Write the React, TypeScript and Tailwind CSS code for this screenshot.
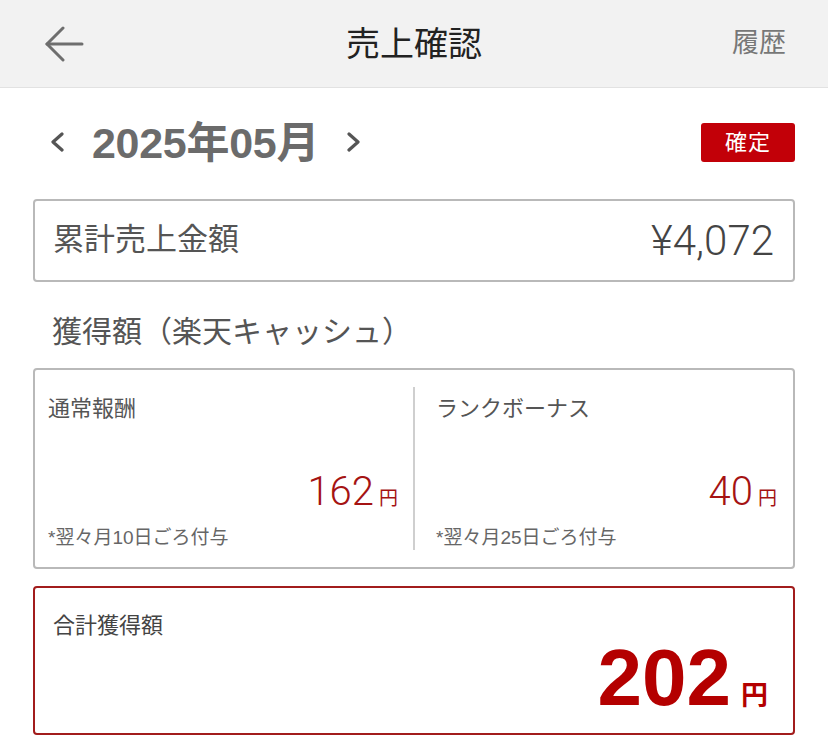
const JP = { fontFamily: '"Liberation Sans", "Noto Sans CJK JP", sans-serif' };

function BackArrow() {
  return (
    <svg width="40" height="36" viewBox="0 0 40 36" fill="none" stroke="#6e6e6e" strokeWidth="3" strokeLinecap="round" strokeLinejoin="round">
      <path d="M38 18H3" />
      <path d="M19 2 3 18l16 16" />
    </svg>
  );
}

function Chevron({ dir }: { dir: 'l' | 'r' }) {
  return (
    <svg width="16" height="20" viewBox="0 0 16 20" fill="none" stroke="#555" strokeWidth="3.2" strokeLinecap="round" strokeLinejoin="round">
      {dir === 'l' ? <path d="M13 2 4 10l9 8" /> : <path d="M3 2l9 8-9 8" />}
    </svg>
  );
}

function Reward({ label, amount, note, className }: { label: string; amount: string; note: string; className: string }) {
  return (
    <div className={`flex flex-col ${className}`}>
      <div className="mt-[8px] text-[22px] leading-[28px] text-[#555]">{label}</div>
      <div className="mt-auto mb-[13px] flex items-baseline justify-end">
        <span className="text-[40px] leading-none font-light text-[#a51313]" style={{ fontFamily: 'Roboto, "Liberation Sans", sans-serif' }}>
          {amount}
        </span>
        <span className="ml-[5px] text-[19px] text-[#a51313]">円</span>
      </div>
      <div className="text-[19px] leading-[24px] text-[#666]">{note}</div>
    </div>
  );
}

export default function App() {
  return (
    <div className="h-[740px] w-[828px] overflow-hidden bg-white" style={JP}>
      <header className="flex h-[88px] items-center border-b border-[#e2e2e2] bg-[#f2f2f2] px-[44px]">
        <div className="flex-1">
          <BackArrow />
        </div>
        <h1 className="text-[34px] leading-none text-[#222]">売上確認</h1>
        <div className="flex flex-1 justify-end">
          <span className="mr-[-2px] text-[27px] text-[#777]">履歴</span>
        </div>
      </header>

      <main className="px-[33px] pt-[31px]">
        <div className="flex h-[46px] items-center justify-between">
          <div className="flex items-center">
            <span className="ml-[16px]"><Chevron dir="l" /></span>
            <span className="ml-[27px] mt-[3px] text-[43px] font-bold tracking-[-0.3px] text-[#6b6b6b]">2025年05月</span>
            <span className="ml-[27px]"><Chevron dir="r" /></span>
          </div>
          <div className="flex h-[39px] w-[94px] items-center justify-center rounded-[3px] bg-[#c20008] text-[22px] tracking-[1px] text-white">
            確定
          </div>
        </div>

        <div className="mt-[34px] flex h-[83px] items-center justify-between rounded-[4px] border-2 border-[#b9b9b9] pl-[18px] pr-[19px]">
          <span className="text-[31px] text-[#555]">累計売上金額</span>
          <span className="text-[42px] font-light text-[#444]" style={{ fontFamily: 'Roboto, "Liberation Sans", sans-serif' }}>
            ¥4,072
          </span>
        </div>

        <h2 className="mt-[30px] pl-[19px] text-[30px] leading-[40px] text-[#555]">獲得額（楽天キャッシュ）</h2>

        <div className="mt-[16px] flex h-[201px] rounded-[4px] border-2 border-[#b9b9b9] py-[17px]">
          <Reward label="通常報酬" amount="162" note="*翌々月10日ごろ付与" className="w-[378px] pl-[13px] pr-[15px]" />
          <div className="w-[2px] bg-[#cfcfcf]" />
          <Reward label="ランクボーナス" amount="40" note="*翌々月25日ごろ付与" className="flex-1 pl-[21px] pr-[16px]" />
        </div>

        <div className="mt-[17px] flex h-[149px] flex-col rounded-[4px] border-2 border-[#a21c1c] pl-[18px] pr-[25px] pt-[23px]">
          <div className="text-[22px] leading-[30px] text-[#444]">合計獲得額</div>
          <div className="mt-[-3px] flex items-baseline justify-end">
            <span className="text-[80px] leading-none font-bold text-[#b40000]">202</span>
            <span className="ml-[10px] text-[27px] font-bold text-[#b40000]">円</span>
          </div>
        </div>
      </main>
    </div>
  );
}
